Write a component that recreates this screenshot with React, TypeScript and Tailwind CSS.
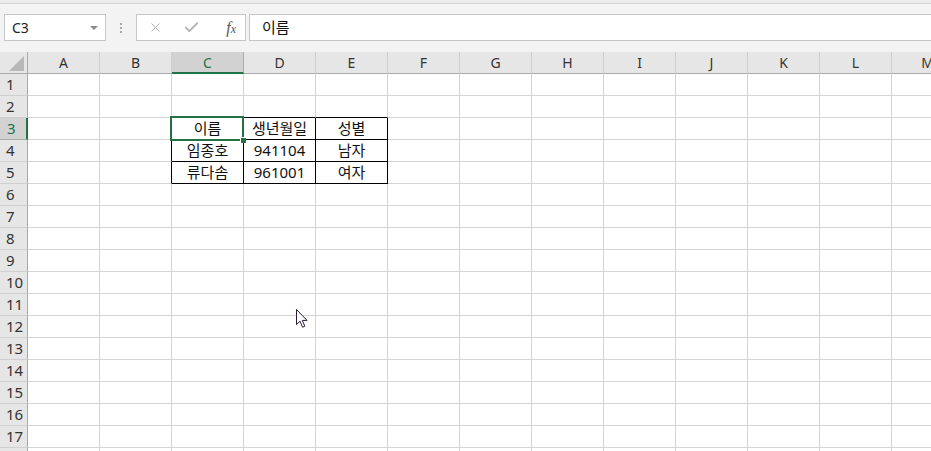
import { X, Check } from 'lucide-react';

const COLS = ['A', 'B', 'C', 'D', 'E', 'F', 'G', 'H', 'I', 'J', 'K', 'L', 'M'];
const ROWS = Array.from({ length: 18 }, (_, i) => i + 1);

const DATA: Record<string, string> = {
  C3: '이름', D3: '생년월일', E3: '성별',
  C4: '임종호', D4: '941104', E4: '남자',
  C5: '류다솜', D5: '961001', E5: '여자',
};

const inTable = (col: string, row: number) => 'CDE'.includes(col) && row >= 3 && row <= 5;

function cellClass(col: string, row: number) {
  const rightBlack = row >= 3 && row <= 5 && 'BCDE'.includes(col);
  const bottomBlack = row >= 2 && row <= 5 && 'CDE'.includes(col);
  return [
    'h-[22px] flex items-center justify-center border-r border-b text-[15px] text-[#111]',
    rightBlack ? 'border-r-black' : 'border-r-[#d4d4d4]',
    bottomBlack ? 'border-b-black' : 'border-b-[#d4d4d4]',
  ].join(' ');
}

function FormulaBar() {
  return (
    <div className="h-[48px] bg-[#f3f3f3] flex items-start pt-[10px] pl-[4px]">
      <div className="w-[102px] h-[27px] bg-white border border-[#c6c6c6] flex items-center justify-between pl-[7px] pr-[7px]">
        <span className="text-[14px] text-[#222]">C3</span>
        <span className="w-0 h-0 border-l-[4px] border-r-[4px] border-t-[4px] border-l-transparent border-r-transparent border-t-[#8a8a8a]" />
      </div>
      <div className="w-[30px] h-[27px] flex flex-col items-center justify-center gap-[2px]">
        <span className="w-[2px] h-[2px] bg-[#a8a8a8]" />
        <span className="w-[2px] h-[2px] bg-[#a8a8a8]" />
        <span className="w-[2px] h-[2px] bg-[#a8a8a8]" />
      </div>
      <div className="w-[110px] h-[27px] bg-white border border-[#c6c6c6] flex items-center pl-[11px] pr-[9px]">
        <X className="w-[15px] h-[15px] text-[#b4b4b4]" strokeWidth={1.6} />
        <Check className="w-[17px] h-[17px] text-[#b4b4b4] ml-[20px]" strokeWidth={2.6} />
        <span className="ml-auto text-[16px] italic text-[#555] font-['Liberation_Serif',serif] leading-none">
          f<span className="text-[12px]">x</span>
        </span>
      </div>
      <div className="flex-1 ml-[3px] h-[27px] bg-white border border-[#c6c6c6] border-r-0 flex items-center pl-[12px]">
        <span className="text-[15px] text-[#111]">이름</span>
      </div>
    </div>
  );
}

function Sheet() {
  return (
    <div className="relative">
      <div className="grid grid-cols-[28px_repeat(13,72px)]">
        {/* header row */}
        <div className="h-[22px] bg-[#e6e6e6] border-r border-b border-[#ababab] flex items-end justify-end pr-[3px] pb-[2px]">
          <svg width="15" height="15" viewBox="0 0 15 15">
            <path d="M15 0 L15 15 L0 15 Z" fill="#b8b8b8" />
          </svg>
        </div>
        {COLS.map(c =>
          c === 'C' ? (
            <div key={c} className="h-[22px] bg-[#d2d2d2] border-r border-r-[#ababab] border-b-2 border-b-[#217346] flex items-center justify-center text-[14px] text-[#217346]">
              {c}
            </div>
          ) : (
            <div key={c} className="h-[22px] bg-[#e6e6e6] border-r border-r-[#d0d0d0] border-b border-b-[#ababab] flex items-center justify-center text-[14px] text-[#333]">
              {c}
            </div>
          )
        )}

        {ROWS.map(r => (
          <div key={r} className="contents">
            {r === 3 ? (
              <div className="h-[22px] bg-[#d2d2d2] border-r-2 border-r-[#217346] border-b border-b-[#ababab] flex items-center pl-[7px] text-[15px] text-[#217346]">
                {r}
              </div>
            ) : (
              <div className="h-[22px] bg-[#e6e6e6] border-r border-r-[#ababab] border-b border-b-[#d0d0d0] flex items-center pl-[6px] text-[15px] text-[#333]">
                {r}
              </div>
            )}
            {COLS.map(c => (
              <div key={c + r} className={cellClass(c, r)}>
                {inTable(c, r) ? DATA[c + r] : ''}
              </div>
            ))}
          </div>
        ))}
      </div>

      {/* active cell C3 */}
      <div className="absolute left-[170px] top-[64px] w-[74px] h-[25px] border-2 border-[#217346]" />
      <div className="absolute left-[240px] top-[85px] w-[6px] h-[6px] bg-[#217346] border-l border-t border-white" />
    </div>
  );
}

export default function App() {
  return (
    <div className="w-[931px] h-[451px] overflow-hidden bg-white relative font-['Noto_Sans','Noto_Sans_CJK_KR',sans-serif]">
      <div className="h-[4px] bg-[#ececec] border-b border-[#d4d4d4]" />
      <FormulaBar />
      <Sheet />

      {/* mouse pointer */}
      <svg className="absolute left-[296px] top-[309px]" width="12" height="20" viewBox="0 0 12 20">
        <path d="M0.5 0.5 L0.5 15.5 L4 12.2 L6.6 18.2 L8.8 17.2 L6.3 11.4 L11 11.4 Z" fill="#fff" stroke="#2b1a3a" strokeWidth="1" strokeLinejoin="miter" />
      </svg>
    </div>
  );
}
